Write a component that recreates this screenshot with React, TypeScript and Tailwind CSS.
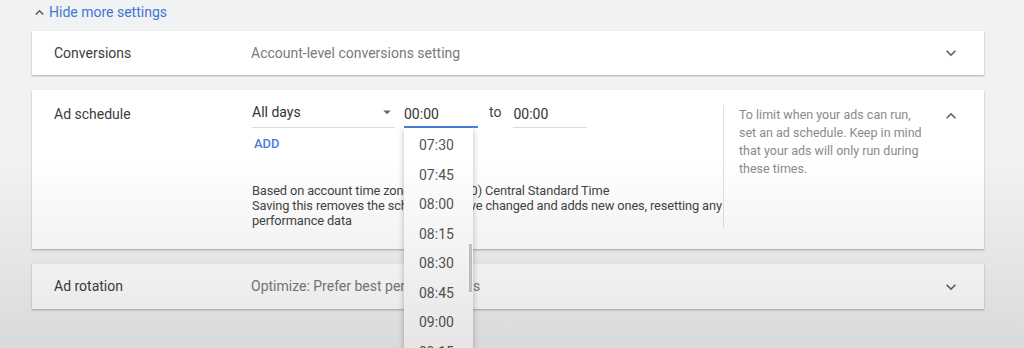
import React from "react";

const ChevronDown = ({ className = "" }: { className?: string }) => (
  <svg viewBox="0 0 24 24" width="20" height="20" className={className} fill="currentColor">
    <path d="M7.41 8.59 12 13.17l4.59-4.58L18 10l-6 6-6-6z" />
  </svg>
);

const ChevronUp = ({ className = "", size = 20 }: { className?: string; size?: number }) => (
  <svg viewBox="0 0 24 24" width={size} height={size} className={className} fill="currentColor">
    <path d="M7.41 15.41 12 10.83l4.59 4.58L18 14l-6-6-6 6z" />
  </svg>
);

const times = ["07:30", "07:45", "08:00", "08:15", "08:30", "08:45", "09:00", "09:15"];

export default function App() {
  return (
    <div
      className="relative w-[1024px] h-[348px] overflow-hidden bg-[#f1f2f4] pl-[32px] pr-[40px]"
      style={{ fontFamily: "Roboto, 'Noto Sans', Arial, sans-serif" }}
    >
      {/* Hide more settings */}
      <div className="h-[31px] flex items-start pt-[3px]">
        <div className="flex items-center h-[18px] text-[#3f76d3] text-[14px] leading-[18px]">
          <ChevronUp size={17} className="text-[#555] mr-[1px] ml-[-1px]" />
          <span>Hide more settings</span>
        </div>
      </div>

      {/* Conversions */}
      <div className="h-[44px] bg-white shadow-[0_1px_2px_rgba(0,0,0,0.3)] flex items-center">
        <div className="w-[219px] pl-[22px] text-[14px] text-[#3c3c3c]">Conversions</div>
        <div className="flex-1 text-[14px] text-[#7a7a7a]">Account-level conversions setting</div>
        <ChevronDown className="text-[#5f6368] mr-[23px]" />
      </div>

      {/* Ad schedule */}
      <div className="mt-[15px] h-[159px] bg-white shadow-[0_1px_2px_rgba(0,0,0,0.3)] flex">
        <div className="w-[220px] pl-[22px] pt-[14px] text-[14px] leading-[20px] text-[#3c3c3c]">
          Ad schedule
        </div>
        <div className="w-[471px] pt-[10px]">
          <div className="flex items-start">
            <div className="w-[143px] h-[28px] border-b border-[#dcdcdc] flex items-start pt-[2px] justify-between">
              <span className="text-[14px] leading-[20px] text-[#333]">All days</span>
              <svg viewBox="0 0 24 24" width="18" height="18" className="text-[#666] mt-[1px] mr-[-1px]" fill="currentColor">
                <path d="M7 10l5 5 5-5z" />
              </svg>
            </div>
            <div className="ml-[9px] w-[74px] h-[28px] border-b-2 border-[#4a80e0] pt-[2px]">
              <span className="text-[14px] leading-[20px] text-[#333]">00:00</span>
            </div>
            <div className="ml-[11px] pt-[2px] text-[14px] leading-[20px] text-[#444]">to</div>
            <div className="ml-[12px] w-[74px] h-[28px] border-b border-[#dcdcdc] pt-[2px]">
              <span className="text-[14px] leading-[20px] text-[#333]">00:00</span>
            </div>
          </div>
          <div className="mt-[8px] pl-[2px] text-[13px] leading-[16px] font-medium text-[#4a7fd6]">ADD</div>
          <div className="mt-[31px] text-[12.8px] leading-[15px] tracking-[-0.12px] text-[#444] whitespace-nowrap">
            <div>Based on account time zone (GMT-06:00) Central Standard Time</div>
            <div>Saving this removes the schedules you've changed and adds new ones, resetting any</div>
            <div>performance data</div>
          </div>
        </div>
        <div className="mt-[15px] mb-[21px] border-l border-[#e0e0e0]" />
        <div className="w-[202px] pl-[15px] pt-[16px] text-[12.5px] leading-[18px] text-[#8a8a8a]">
          To limit when your ads can run, set an ad schedule. Keep in mind that your ads will only run during these times.
        </div>
        <div className="flex-1" />
        <div className="pt-[16px] pr-[23px]">
          <ChevronUp className="text-[#5f6368]" />
        </div>
      </div>

      {/* Ad rotation */}
      <div className="mt-[15px] h-[45px] bg-white shadow-[0_1px_2px_rgba(0,0,0,0.3)] flex items-center">
        <div className="w-[219px] pl-[22px] text-[14px] text-[#3c3c3c]">Ad rotation</div>
        <div className="flex-1 text-[14px] text-[#7a7a7a]">Optimize: Prefer best performing ads</div>
        <ChevronDown className="text-[#5f6368] mr-[23px]" />
      </div>

      {/* Time dropdown menu */}
      <div className="absolute left-[404px] top-[128px] w-[69px] h-[240px] bg-white shadow-[0_2px_6px_rgba(0,0,0,0.28)] pt-[3px]">
        {times.map((t) => (
          <div key={t} className="h-[29.5px] flex items-center pl-[15px] text-[14px] text-[#555]">
            {t}
          </div>
        ))}
        <div className="absolute right-[1px] top-[116px] w-[3px] h-[48px] bg-[#c9c9c9]" />
      </div>

      {/* vignette overlay */}
      <div className="pointer-events-none absolute inset-0 bg-linear-to-b from-transparent via-transparent via-45% to-black/10" />
    </div>
  );
}
